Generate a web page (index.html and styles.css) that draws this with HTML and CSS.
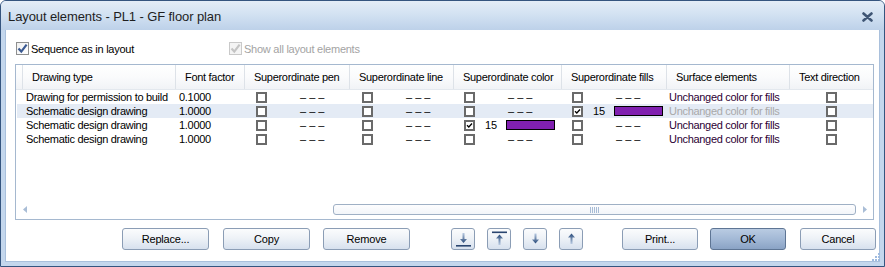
FILE: index.html
```html
<!DOCTYPE html>
<html lang="en">

<head>
    <meta charset="UTF-8">
    <title>Layout elements</title>
    <link rel="stylesheet" href="styles.css">
</head>

<body>
    <div class="window">
        <div class="titlebar">
            <span class="title">Layout elements - PL1 - GF floor plan</span>
            <svg class="close" width="11" height="10" viewBox="0 0 11 10">
                <path d="M1.5 1.5 L9.5 8.5 M9.5 1.5 L1.5 8.5" stroke="#3f5675" stroke-width="2.6" stroke-linecap="round"/>
            </svg>
        </div>

        <div class="client">
            <div class="options">
                <label class="opt">
                    <span class="cb">
                        <svg width="11" height="11" viewBox="0 0 11 11"><path d="M1.5 5.5 L4.3 8.6 L9.6 1.6" fill="none" stroke="#3b5a92" stroke-width="2.2"/></svg>
                    </span>
                    Sequence as in layout
                </label>
                <label class="opt disabled">
                    <span class="cb">
                        <svg width="11" height="11" viewBox="0 0 11 11"><path d="M1.5 5.5 L4.3 8.6 L9.6 1.6" fill="none" stroke="#c4c4c4" stroke-width="2.2"/></svg>
                    </span>
                    Show all layout elements
                </label>
            </div>

            <div class="list">
                <div class="row head">
                    <div class="c"></div>
                    <div class="c">Drawing type</div>
                    <div class="c">Font factor</div>
                    <div class="c">Superordinate pen</div>
                    <div class="c">Superordinate line</div>
                    <div class="c">Superordinate color</div>
                    <div class="c">Superordinate fills</div>
                    <div class="c">Surface elements</div>
                    <div class="c">Text direction</div>
                </div>

                <div class="row">
                    <div class="c"></div>
                    <div class="c name">Drawing for permission to build</div>
                    <div class="c num">0.1000</div>
                    <div class="c opt-cell pen"><span class="box"></span><span class="dash">– – –</span></div>
                    <div class="c opt-cell line"><span class="box"></span><span class="dash">– – –</span></div>
                    <div class="c opt-cell"><span class="box"></span><span class="dash">– – –</span></div>
                    <div class="c opt-cell"><span class="box"></span><span class="dash">– – –</span></div>
                    <div class="c surface">Unchanged color for fills</div>
                    <div class="c dir"><span class="box"></span></div>
                </div>

                <div class="row sel">
                    <div class="c"></div>
                    <div class="c name">Schematic design drawing</div>
                    <div class="c num">1.0000</div>
                    <div class="c opt-cell pen"><span class="box"></span><span class="dash">– – –</span></div>
                    <div class="c opt-cell line"><span class="box"></span><span class="dash">– – –</span></div>
                    <div class="c opt-cell"><span class="box"></span><span class="dash">– – –</span></div>
                    <div class="c opt-cell"><span class="box on"></span><span class="val">15</span><span class="swatch"></span></div>
                    <div class="c surface off">Unchanged color for fills</div>
                    <div class="c dir"><span class="box"></span></div>
                </div>

                <div class="row">
                    <div class="c"></div>
                    <div class="c name">Schematic design drawing</div>
                    <div class="c num">1.0000</div>
                    <div class="c opt-cell pen"><span class="box"></span><span class="dash">– – –</span></div>
                    <div class="c opt-cell line"><span class="box"></span><span class="dash">– – –</span></div>
                    <div class="c opt-cell"><span class="box on"></span><span class="val">15</span><span class="swatch"></span></div>
                    <div class="c opt-cell"><span class="box"></span><span class="dash">– – –</span></div>
                    <div class="c surface">Unchanged color for fills</div>
                    <div class="c dir"><span class="box"></span></div>
                </div>

                <div class="row">
                    <div class="c"></div>
                    <div class="c name">Schematic design drawing</div>
                    <div class="c num">1.0000</div>
                    <div class="c opt-cell pen"><span class="box"></span><span class="dash">– – –</span></div>
                    <div class="c opt-cell line"><span class="box"></span><span class="dash">– – –</span></div>
                    <div class="c opt-cell"><span class="box"></span><span class="dash">– – –</span></div>
                    <div class="c opt-cell"><span class="box"></span><span class="dash">– – –</span></div>
                    <div class="c surface">Unchanged color for fills</div>
                    <div class="c dir"><span class="box"></span></div>
                </div>

                <div class="filler"></div>

                <div class="hscroll">
                    <span class="arrow">
                        <svg width="4" height="7" viewBox="0 0 4 7"><path d="M4 0 L0 3.5 L4 7 Z" fill="#a9bdd6"/></svg>
                    </span>
                    <div class="track">
                        <div class="thumb">
                            <svg width="9" height="6" viewBox="0 0 9 6">
                                <path d="M0.5 0 V6 M2.5 0 V6 M4.5 0 V6 M6.5 0 V6 M8.5 0 V6" stroke="#a8bcd6" stroke-width="1"/>
                            </svg>
                        </div>
                    </div>
                    <span class="arrow">
                        <svg width="4" height="7" viewBox="0 0 4 7"><path d="M0 0 L4 3.5 L0 7 Z" fill="#a9bdd6"/></svg>
                    </span>
                </div>
            </div>

            <div class="buttons">
                <button type="button" class="btn wide">Replace...</button>
                <button type="button" class="btn wide copy">Copy</button>
                <button type="button" class="btn wide remove">Remove</button>

                <button type="button" class="btn icon first">
                    <svg width="17" height="16" viewBox="0 0 17 16">
                        <defs>
                            <linearGradient id="gd" x1="0" y1="0" x2="0" y2="1">
                                <stop offset="0" stop-color="#b9cbe2"/>
                                <stop offset="1" stop-color="#284a7a"/>
                            </linearGradient>
                            <linearGradient id="gu" x1="0" y1="1" x2="0" y2="0">
                                <stop offset="0" stop-color="#b9cbe2"/>
                                <stop offset="1" stop-color="#284a7a"/>
                            </linearGradient>
                        </defs>
                        <path d="M7.5 2 H9.5 V8 H12 L8.5 12 L5 8 H7.5 Z" fill="url(#gd)"/>
                        <rect x="1" y="14" width="15" height="1.6" fill="#2a4670"/>
                    </svg>
                </button>
                <button type="button" class="btn icon">
                    <svg width="17" height="16" viewBox="0 0 17 16">
                        <rect x="1" y="0.5" width="15" height="1.6" fill="#2a4670"/>
                        <path d="M8.5 3.5 L12 7.5 H9.5 V14 H7.5 V7.5 H5 Z" fill="url(#gu)"/>
                    </svg>
                </button>
                <button type="button" class="btn icon">
                    <svg width="17" height="16" viewBox="0 0 17 16">
                        <path d="M7.5 2.5 H9.5 V8.5 H12 L8.5 12.5 L5 8.5 H7.5 Z" fill="url(#gd)"/>
                    </svg>
                </button>
                <button type="button" class="btn icon">
                    <svg width="17" height="16" viewBox="0 0 17 16">
                        <path d="M8.5 2.5 L12 6.5 H9.5 V13 H7.5 V6.5 H5 Z" fill="url(#gu)"/>
                    </svg>
                </button>

                <button type="button" class="btn std print">Print...</button>
                <button type="button" class="btn std ok">OK</button>
                <button type="button" class="btn std cancel">Cancel</button>
            </div>
        </div>

        <svg class="grip" width="10" height="10" viewBox="0 0 10 10">
            <g fill="#9fbbe0">
                <rect x="7" y="1" width="2" height="2"/>
                <rect x="4" y="4" width="2" height="2"/>
                <rect x="7" y="4" width="2" height="2"/>
                <rect x="1" y="7" width="2" height="2"/>
                <rect x="4" y="7" width="2" height="2"/>
                <rect x="7" y="7" width="2" height="2"/>
            </g>
        </svg>
    </div>
</body>

</html>
```

FILE: styles.css
```css
body {
    margin: 0;
    font-family: "Liberation Sans", Arial, sans-serif;
    font-size: 11px;
    color: #000;
    background: #fff;
}

.window {
    position: relative;
    box-sizing: border-box;
    width: 885px;
    height: 267px;
    border: 1px solid #35557f;
    border-radius: 6px 6px 0 0;
    background: #c4d7ed;
    display: flex;
    flex-direction: column;
}

.titlebar {
    height: 29px;
    flex: none;
    display: flex;
    align-items: center;
    justify-content: space-between;
    padding: 0 11px 0 7px;
    border-radius: 5px 5px 0 0;
    background: linear-gradient(#e4edf7, #d3e2f2 45%, #bdd1e9);
}

.title {
    font-size: 13px;
    color: #1e1e1e;
    letter-spacing: -0.1px;
    padding-top: 2px;
}

.close {
    margin-top: 2px;
}

.client {
    flex: 1;
    margin: 0 4px 4px 4px;
    background: #fff;
    border: 1px solid #a9c0dc;
    border-top: none;
    display: flex;
    flex-direction: column;
}

/* top option checkboxes */
.options {
    display: flex;
    align-items: center;
    height: 13px;
    margin: 12px 0 9px 10px;
}

.opt {
    display: flex;
    align-items: center;
    gap: 2px;
    letter-spacing: -0.25px;
}

.opt.disabled {
    margin-left: 95px;
    color: #a3a3a3;
}

.cb {
    box-sizing: border-box;
    width: 13px;
    height: 13px;
    border: 1px solid #8e8f8f;
    background: linear-gradient(135deg, #f0f0f0, #fff);
    display: flex;
    align-items: center;
    justify-content: center;
}

.opt.disabled .cb {
    border-color: #c9c9c9;
    background: #f4f4f4;
}

/* list view */
.list {
    box-sizing: border-box;
    width: 859px;
    height: 156px;
    margin-left: 9px;
    border: 1px solid #a5b8cf;
    display: flex;
    flex-direction: column;
}

.row {
    display: grid;
    grid-template-columns: 7px 153px 69px 105px 104px 108px 105px 123px 83px;
    height: 14px;
    align-items: center;
    letter-spacing: -0.3px;
    white-space: nowrap;
}

.row.head {
    height: 25px;
    box-sizing: border-box;
    border-bottom: 1px solid #e3e8ee;
    background: linear-gradient(#ffffff, #fafbfc 50%, #f1f3f6);
    align-items: stretch;
}

.head .c {
    border-right: 1px solid #dde2e8;
    padding-left: 9px;
    display: flex;
    align-items: center;
    padding-bottom: 1px;
}

.head .c:first-child {
    padding-left: 0;
}

.head .c:last-child {
    border-right: none;
}

.row.sel {
    background: linear-gradient(90deg, #fff 1px, #e4ebf5 1px);
}

.c {
    overflow: hidden;
}

.name,
.num {
    padding-left: 3px;
}

.opt-cell {
    display: flex;
    align-items: center;
    padding-left: 10px;
}

.opt-cell.pen {
    padding-left: 11px;
}

.opt-cell.line {
    padding-left: 12px;
}

.box {
    box-sizing: border-box;
    width: 11px;
    height: 11px;
    flex: none;
    border: 2px solid #6a6a6a;
    background: #fff;
}

.box.on {
    background: #fff url("data:image/svg+xml,%3Csvg xmlns='http://www.w3.org/2000/svg' width='7' height='7'%3E%3Cpath d='M1 3.2 L2.8 5 L6 1.5' fill='none' stroke='%23000' stroke-width='1.3'/%3E%3C/svg%3E") center / 7px 7px no-repeat;
}

.dash {
    margin-left: 33px;
    letter-spacing: 0;
    font-size: 11px;
}

.val {
    margin-left: 10px;
    letter-spacing: 0;
}

.swatch {
    box-sizing: border-box;
    width: 49px;
    height: 10px;
    margin-left: 9px;
    border: 1px solid #000;
    background: #8020b0;
}

.surface {
    padding-left: 2px;
    color: #2c0034;
}

.surface.off {
    color: #a9a9a9;
}

.dir {
    display: flex;
    padding-left: 36px;
}

.filler {
    flex: 1;
}

.hscroll {
    display: flex;
    align-items: center;
    height: 17px;
    margin-bottom: 1px;
}

.arrow {
    width: 17px;
    display: flex;
    justify-content: center;
}

.track {
    flex: 1;
    display: flex;
    padding-left: 300px;
}

.thumb {
    flex: 1;
    height: 11px;
    box-sizing: border-box;
    border: 1px solid #9fb0c5;
    border-radius: 3px;
    background: linear-gradient(#fdfdfe, #f2f5f9);
    display: flex;
    align-items: center;
    justify-content: center;
}

/* bottom buttons */
.buttons {
    display: flex;
    align-items: center;
    margin-top: 8px;
    padding-left: 116px;
}

.btn {
    box-sizing: border-box;
    height: 22px;
    border: 1px solid #8b9db5;
    border-radius: 3px;
    background: linear-gradient(#fbfcfd, #eef2f7 45%, #d7e1ee);
    font-family: "Liberation Sans", Arial, sans-serif;
    font-size: 11px;
    letter-spacing: -0.2px;
    color: #000;
    padding: 0;
    cursor: pointer;
}

.btn.wide {
    width: 87px;
}

.btn.copy {
    margin-left: 14px;
}

.btn.remove {
    margin-left: 13px;
}

.btn.icon {
    width: 24px;
    display: flex;
    align-items: center;
    justify-content: center;
    margin-left: 12px;
}

.btn.icon.first {
    margin-left: 41px;
}

.btn.std {
    width: 76px;
}

.btn.print {
    margin-left: 39px;
}

.btn.ok {
    margin-left: 12px;
    border-color: #5e7594;
    background: linear-gradient(#b9cbe2, #a3b9d6 50%, #8aa3c5);
}

.btn.cancel {
    margin-left: 14px;
}

.grip {
    position: absolute;
    right: 3px;
    bottom: 4px;
}
```
